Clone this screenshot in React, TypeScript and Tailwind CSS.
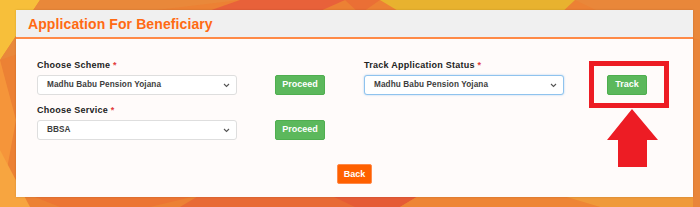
import React from "react";

function Chevron() {
  return (
    <svg width="7" height="5" viewBox="0 0 7 5" className="shrink-0">
      <path d="M1 1 L3.5 3.5 L6 1" fill="none" stroke="#555" strokeWidth="1.1" />
    </svg>
  );
}

function FakeSelect({ value, focus }: { value: string; focus?: boolean }) {
  return (
    <div
      className={
        focus
          ? "flex h-[20px] w-[200px] items-center justify-between rounded-[3px] border border-[#8fc3ee] bg-white pl-[9px] pr-[6px] shadow-[0_0_2px_rgba(102,175,233,0.6)]"
          : "flex h-[20px] w-[200px] items-center justify-between rounded-[3px] border border-[#dedede] bg-white pl-[9px] pr-[6px]"
      }
    >
      <span className="text-[8.2px] font-bold leading-none tracking-[0.1px] text-[#3d3d3d]">{value}</span>
      <Chevron />
    </div>
  );
}

function Label({ text }: { text: string }) {
  return (
    <div className="h-[12px] text-[9px] font-bold leading-[12px] tracking-[0.25px] text-[#222]">
      {text} <span className="text-[#e23b3b]">*</span>
    </div>
  );
}

function GreenBtn({ text, w }: { text: string; w: string }) {
  return (
    <div
      className={`flex h-[20px] items-center justify-center rounded-[2px] border border-[#4fae4f] bg-[#5cb85c] text-[9px] font-bold leading-none text-white ${w}`}
    >
      {text}
    </div>
  );
}

export default function App() {
  return (
    <div
      className="relative h-[207px] w-[700px] overflow-hidden bg-[#ec8134]"
      style={{ fontFamily: '"Liberation Sans", Arial, sans-serif' }}
    >
      <svg className="absolute inset-0" width="700" height="207" viewBox="0 0 700 207">
        <polygon points="0,0 40,0 0,60" fill="#f7bf3a" />
        <polygon points="40,0 240,0 140,12 0,60" fill="#e9883a" />
        <polygon points="240,0 345,0 300,20 200,14" fill="#e8613a" />
        <polygon points="345,0 380,0 360,14" fill="#ea6f35" />
        <polygon points="380,0 575,0 560,14 400,12" fill="#e8b22f" />
        <polygon points="575,0 700,0 700,40 600,12" fill="#e9873a" />
        <polygon points="0,60 16,120 0,207" fill="#f5953a" />
        <polygon points="0,150 30,207 0,207" fill="#f7a540" />
        <polygon points="30,195 200,195 150,207 60,207" fill="#ec7533" />
        <polygon points="200,195 330,195 360,207 180,207" fill="#e86a35" />
        <polygon points="330,195 420,195 400,207 355,207" fill="#e55b36" />
        <polygon points="420,195 560,195 600,207 400,207" fill="#ee8535" />
        <polygon points="560,195 700,195 700,207 600,207" fill="#ef9a3a" />
        <polygon points="693,40 700,40 700,207 693,207" fill="#e9853a" />
      </svg>

      <div className="relative ml-[16px] mt-[10px] flex h-[187px] w-[677px] flex-col bg-[#fffbfa] shadow-[0_0_2px_rgba(0,0,0,0.15)]">
        <div className="flex h-[29px] items-center border-b-2 border-[#ff8a47] bg-[#f0f0f0] pl-[12px]">
          <span className="text-[14px] font-bold leading-none tracking-[0.1px] text-[#ff6a13]">
            Application For Beneficiary
          </span>
        </div>

        <div className="flex flex-1 flex-col pl-[21px] pt-[20px]">
          <div className="flex">
            <div className="flex flex-col">
              <Label text="Choose Scheme" />
              <div className="mt-[4px] flex items-center">
                <FakeSelect value="Madhu Babu Pension Yojana" />
                <div className="ml-[38px] -mt-[1px]">
                  <GreenBtn text="Proceed" w="w-[50px]" />
                </div>
              </div>
              <div className="mt-[9px]">
                <Label text="Choose Service" />
              </div>
              <div className="mt-[4px] flex items-center">
                <FakeSelect value="BBSA" />
                <div className="ml-[38px] -mt-[1px]">
                  <GreenBtn text="Proceed" w="w-[50px]" />
                </div>
              </div>
            </div>
            <div className="ml-[39px] flex flex-col">
              <Label text="Track Application Status" />
              <div className="mt-[4px] flex items-center">
                <FakeSelect value="Madhu Babu Pension Yojana" focus />
                <div className="ml-[43px] -mt-[1px]">
                  <GreenBtn text="Track" w="w-[40px]" />
                </div>
              </div>
            </div>
          </div>
          <div className="mt-[24px] flex justify-center pr-[21px]">
            <div className="flex h-[20px] w-[35px] items-center justify-center rounded-[2px] border border-[#ff8a4a] bg-[#ff6000] text-[9px] font-bold leading-none text-white">
              Back
            </div>
          </div>
        </div>
      </div>

      <div className="absolute left-[589px] top-[61px] h-[47px] w-[80px] border-[5px] border-[#ed1c24]" />
      <svg className="absolute left-0 top-0" width="700" height="207" viewBox="0 0 700 207">
        <polygon points="632,109 658,140 647,140 647,167 618,167 618,140 607,140" fill="#ed1c24" />
      </svg>
    </div>
  );
}
